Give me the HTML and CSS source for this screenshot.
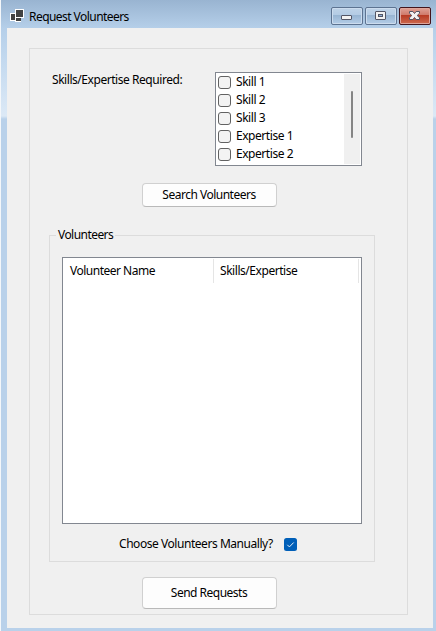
FILE: index.html
```html
<!DOCTYPE html>
<html lang="en">
<head>
<meta charset="utf-8">
<title>Request Volunteers</title>
<link rel="stylesheet" href="styles.css">
</head>
<body>
<div class="window">
  <header class="titlebar">
    <svg class="app-icon" width="14" height="13" viewBox="0 0 14 13" shape-rendering="crispEdges">
      <path fill="#fff" d="M5 0h9v9h-3v4H5v-1H0V4h5z"/>
      <path fill="#424242" d="M6 1h7v7H6zM1 5h4v6H1zM6 9h5v3H6z"/>
    </svg>
    <h1 class="title">Request Volunteers</h1>
    <div class="controls">
      <button class="control" aria-label="Minimize"><svg width="12" height="6" viewBox="0 0 12 6"><rect x=".5" y=".5" width="10" height="4" rx=".5" fill="#f2f2f2" stroke="#535666"/></svg></button>
      <button class="control" aria-label="Maximize"><svg width="12" height="10" viewBox="0 0 12 10"><rect x=".5" y=".5" width="10" height="8" rx=".5" fill="#f2f2f2" stroke="#535666"/><rect x="3.5" y="3.5" width="4" height="2" fill="#8fb0d4" stroke="#535666"/></svg></button>
      <button class="control close" aria-label="Close"><svg width="12" height="10" viewBox="0 0 12 10"><path d="M.5.5h3.400L5.500 2.500 7.100.5h3.400v1.800L8.200 4.500l2.300 2.200v1.800H7.100L5.500 6.500 3.900 8.500H.5V6.700l2.300-2.200L.5 2.300z" fill="#f4f2f2" stroke="#535666"/></svg></button>
    </div>
  </header>
  <main class="client">
    <section class="panel">
      <div class="skills-row">
        <span class="label">Skills/Expertise Required:</span>
        <div class="checklist">
          <ul class="options">
            <li><i class="box"></i><span>Skill 1</span></li>
            <li><i class="box"></i><span>Skill 2</span></li>
            <li><i class="box"></i><span>Skill 3</span></li>
            <li><i class="box"></i><span>Expertise 1</span></li>
            <li><i class="box"></i><span>Expertise 2</span></li>
          </ul>
          <div class="scrollbar"><div class="thumb"></div></div>
        </div>
      </div>
      <button class="button search">Search Volunteers</button>
      <fieldset class="group">
        <legend>Volunteers</legend>
        <div class="list">
          <div class="list-head">
            <span class="col name">Volunteer Name</span>
            <span class="col skills">Skills/Expertise</span>
          </div>
        </div>
        <div class="manual">
          <span>Choose Volunteers Manually?</span>
          <svg class="checked" width="13" height="13" viewBox="0 0 13 13"><rect width="13" height="13" rx="2.500" fill="#005fb8"/><path d="M3.300 6.800l2.100 2.100 4.300-4.400" fill="none" stroke="#e4eff9"/></svg>
        </div>
      </fieldset>
      <button class="button send">Send Requests</button>
    </section>
  </main>
</div>
</body>
</html>
```
FILE: styles.css
```css
* { box-sizing: border-box; }
body {
  margin: 0;
  background: #f0f0f0;
  color: #000;
  font: 12px/16px "Noto Sans", "Open Sans", sans-serif;
  letter-spacing: -0.45px;
  white-space: nowrap;
}
.window {
  width: 436px;
  height: 631px;
  border-left: 1px solid #f4f7fa;
  padding: 0 3px 3px 6px;
  background:
    linear-gradient(#99b4d1 0, #b5cfe9 28px, #c3d9ef 60px, #dce9f6 116px, #b9d1ea 119px);
}
.titlebar {
  display: flex;
  height: 28px;
  padding: 0 2px 0 3px;
}
.app-icon { margin-top: 9px; }
.title {
  margin: 9px 0 0 5px;
  font: inherit;
  letter-spacing: -0.55px;
}
.controls {
  display: flex;
  gap: 2px;
  margin: 7px 0 0 auto;
}
.control {
  display: flex;
  align-items: center;
  justify-content: center;
  width: 32px;
  height: 18px;
  padding: 0;
  border: 1px solid #5d7391;
  border-radius: 2px;
  background: linear-gradient(#bfd3e8 0, #b3cbe4 44%, #98b5d3 46%, #b4cde7 100%);
  box-shadow: inset 0 0 0 1px #ccdcee;
}
.control:first-child svg { margin-top: 4px; }
.close {
  border-color: #43141c;
  background: linear-gradient(#e0a297 0, #cf7969 44%, #b83b24 46%, #cd6a4f 100%);
  box-shadow: inset 0 0 0 1px #dfa59b;
}
.client {
  height: 600px;
  padding: 20px 25px 13px 22px;
  background: #f0f0f0;
}
.panel {
  display: flex;
  flex-direction: column;
  height: 567px;
  border: 1px solid #dcdcdc;
  padding: 23px 0 0 19px;
}
.skills-row {
  display: flex;
  justify-content: space-between;
  padding: 0 45px 0 3px;
}
.checklist {
  display: flex;
  width: 147px;
  height: 94px;
  border: 1px solid #828790;
  padding: 1px;
  background: #fff;
}
.options {
  flex: 1;
  margin: 0;
  padding: 0 0 0 1px;
  list-style: none;
}
.options li {
  display: flex;
  align-items: flex-start;
  gap: 5px;
  height: 18px;
}
.box {
  width: 13px;
  height: 13px;
  margin-top: 2px;
  border: 1px solid #626262;
  border-radius: 3px;
  background: #f3f3f3;
}
.scrollbar {
  width: 16px;
  padding: 17px 0 0 7px;
  background: #f0f0f0;
}
.thumb {
  width: 2px;
  height: 47px;
  border-radius: 1px;
  background: #858585;
}
.button {
  width: 135px;
  margin-left: 93px;
  padding: 0 1px 0 0;
  border: 1px solid #d0d0d0;
  border-bottom-color: #b9b9b9;
  border-radius: 4px;
  background: #fdfdfd;
  color: inherit;
  font: inherit;
  letter-spacing: -0.5px;
}
.search {
  height: 24px;
  margin-top: 17px;
}
.send {
  height: 32px;
  margin-top: 15px;
}
.group {
  width: 326px;
  height: 335px;
  margin: 20px 0 0;
  border: 1px solid #dcdcdc;
  padding: 0 12px;
}
.group legend {
  height: 16px;
  margin-left: -6px;
  padding: 0 2px;
  letter-spacing: -0.55px;
}
.list {
  width: 300px;
  height: 267px;
  margin-top: 14px;
  border: 1px solid #828790;
  padding: 1px;
  background: #fff;
}
.list-head { display: flex; height: 24px; }
.col {
  border-right: 1px solid #e5e5e5;
  padding: 4px 0 0 6px;
}
.name {
  width: 150px;
  letter-spacing: -0.5px;
}
.skills { width: 145px; }
.manual {
  display: flex;
  align-items: center;
  justify-content: space-between;
  width: 178px;
  margin: 12px 0 0 57px;
}
```
